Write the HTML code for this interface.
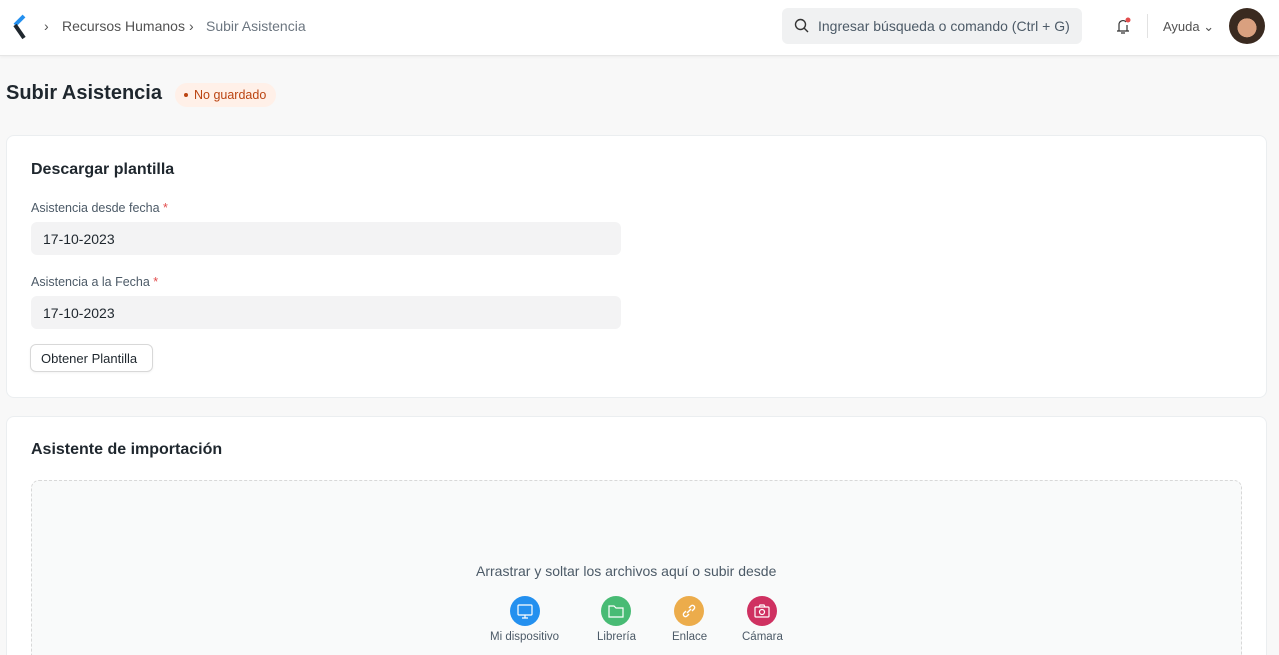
<!DOCTYPE html>
<html style="width:1279px;height:655px;overflow:hidden"><head><meta charset="utf-8"><style>
*{box-sizing:border-box;margin:0;padding:0}
body{width:1279px;height:655px;overflow:hidden;background:#f8f8f8;font-family:"Liberation Sans",sans-serif;color:#1f272e;position:relative}
.nav{position:absolute;left:0;top:0;width:1279px;height:56px;background:#fff;border-bottom:1px solid #e6e6e6;box-shadow:0 1px 3px rgba(0,0,0,.05)}
.abs{position:absolute}
.bc{font-size:14px;color:#525252;top:18px}
.search{left:782px;top:8px;width:300px;height:36px;background:#f0f1f2;border-radius:6px;font-size:14px;color:#4c5a67;padding:10px 0 0 36px}
.card{position:absolute;left:6px;width:1261px;background:#fff;border:1px solid #ebeef0;border-radius:8px;overflow:hidden}
h2{font-size:16px;font-weight:bold;position:absolute;left:24px}
.lbl{position:absolute;left:24px;font-size:12.5px;color:#4c5a67}
.lbl b{color:#e24c4c;font-weight:normal}
.inp{position:absolute;left:24px;width:590px;height:33px;background:#f3f3f4;border-radius:6px;font-size:14px;padding:9px 12px}
.ic{position:absolute;top:596px;width:30px;height:30px;border-radius:50%}
.il{position:absolute;top:631px;font-size:11.5px;color:#4c5a67}
</style></head><body>
<div class="nav">
<svg class="abs" style="left:11px;top:14px" width="16" height="26"><path d="M13 2 L4 11" stroke="#2490ef" stroke-width="4"/><path d="M4 11 L13 24" stroke="#1f272e" stroke-width="4"/></svg>
<span class="abs bc" style="left:44px">›</span>
<span class="abs bc" style="left:62px">Recursos Humanos</span>
<span class="abs bc" style="left:189px">›</span>
<span class="abs bc" style="left:206px;color:#6c7680">Subir Asistencia</span>
<div class="abs search">Ingresar búsqueda o comando (Ctrl + G)</div>
<svg class="abs" style="left:794px;top:18px" width="16" height="16"><circle cx="6.5" cy="6.5" r="5" fill="none" stroke="#333" stroke-width="1.4"/><path d="M10 10l4 4" stroke="#333" stroke-width="1.4"/></svg>
<svg class="abs" style="left:1113px;top:16px" width="20" height="20"><path d="M4 15h12M6 15V9a4 4 0 0 1 7-3M14 9v6M8 17h4" fill="none" stroke="#333" stroke-width="1.2"/><circle cx="15" cy="4" r="2.5" fill="#e24c4c"/></svg>
<div class="abs" style="left:1147px;top:14px;width:1px;height:24px;background:#e2e2e2"></div>
<span class="abs" style="left:1163px;top:19px;font-size:13px;color:#525252">Ayuda ⌄</span>
<div class="abs" style="left:1229px;top:8px;width:36px;height:36px;border-radius:50%;background:radial-gradient(circle at 50% 55%,#d9a07f 0 35%,#3a2a20 36%)"></div>
</div>
<div class="abs" style="left:6px;top:82px;font-size:20px;font-weight:bold">Subir Asistencia</div>
<div class="abs" style="left:175px;top:83px;height:24px;padding:5px 10px 0 19px;background:#fff0e8;border-radius:12px;font-size:12.5px;color:#bb4411">No guardado</div>
<div class="abs" style="left:184px;top:93px;width:4px;height:4px;border-radius:50%;background:#bb4411"></div>
<div class="card" style="top:135px;height:263px">
<h2 style="top:25px">Descargar plantilla</h2>
<div class="lbl" style="top:65px">Asistencia desde fecha <b>*</b></div>
<div class="inp" style="top:86px">17-10-2023</div>
<div class="lbl" style="top:139px">Asistencia a la Fecha <b>*</b></div>
<div class="inp" style="top:160px">17-10-2023</div>
<div class="abs" style="left:23px;top:208px;width:123px;height:28px;border:1px solid #d8d8d8;border-radius:6px;font-size:13px;padding:6px 10px;box-shadow:0 1px 2px rgba(0,0,0,.05)">Obtener Plantilla</div>
</div>
<div class="card" style="top:416px;height:239px;border-bottom:none;border-radius:8px 8px 0 0">
<h2 style="top:24px">Asistente de importación</h2>
<div class="abs" style="left:24px;top:63px;width:1211px;height:200px;border:1px dashed #d8d8d8;border-radius:8px;background:#f9fafa"></div>
</div>
<div class="abs" style="left:476px;top:563px;font-size:14px;color:#4c5a67">Arrastrar y soltar los archivos aquí o subir desde</div>
<div class="ic" style="left:510px;background:#2490ef"></div>
<div class="ic" style="left:601px;background:#48bb74"></div>
<div class="ic" style="left:674px;background:#ecac4b"></div>
<div class="ic" style="left:747px;background:#cf3161"></div>
<svg class="abs" style="left:510px;top:596px" width="30" height="30" fill="none" stroke="#fff" stroke-width="1.2"><rect x="8" y="9" width="14" height="10" rx="1"/><path d="M12 22h6M15 19v3"/></svg>
<svg class="abs" style="left:601px;top:596px" width="30" height="30" fill="none" stroke="#fff" stroke-width="1.2"><path d="M8 11v10h14V12h-7l-2-2H8z"/></svg>
<svg class="abs" style="left:674px;top:596px" width="30" height="30" fill="none" stroke="#fff" stroke-width="1.4"><path d="M13 17l4-4M12 15l-2 2a2 2 0 0 0 3 3l2-2M18 15l2-2a2 2 0 0 0-3-3l-2 2"/></svg>
<svg class="abs" style="left:747px;top:596px" width="30" height="30" fill="none" stroke="#fff" stroke-width="1.2"><rect x="8" y="11" width="14" height="10" rx="1"/><path d="M12 11l1-2h4l1 2"/><circle cx="15" cy="16" r="2.5"/></svg>
<div class="il" style="left:490px">Mi dispositivo</div>
<div class="il" style="left:597px">Librería</div>
<div class="il" style="left:672px">Enlace</div>
<div class="il" style="left:742px">Cámara</div>
</body></html>
